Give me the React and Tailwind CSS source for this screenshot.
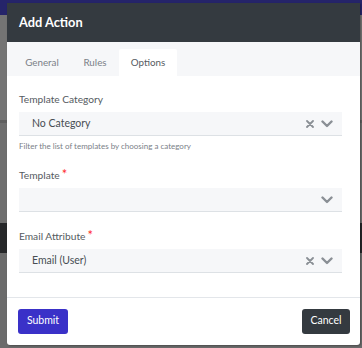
import React from 'react';

const font = { fontFamily: 'Lato, "Open Sans", sans-serif' };

function Chevron() {
  return (
    <svg width="12" height="8" viewBox="0 0 12 8" className="text-[#8a8f95]">
      <path d="M1.5 1.5 L6 6 L10.5 1.5" fill="none" stroke="currentColor" strokeWidth="2.4" strokeLinecap="round" strokeLinejoin="round" />
    </svg>
  );
}

function Clear() {
  return (
    <svg width="8" height="8" viewBox="0 0 8 8" className="text-[#8a8f95]">
      <path d="M1 1 L7 7 M7 1 L1 7" fill="none" stroke="currentColor" strokeWidth="1.8" strokeLinecap="round" />
    </svg>
  );
}

function Select({ value, clearable }) {
  return (
    <div className="h-[24px] bg-[#f6f7f9] border-b border-[#dde1e5] flex items-center pl-[13px] pr-[9px]">
      <span className="flex-1 text-[10.5px] text-[#474d53]">{value}</span>
      <div className="flex items-center gap-[7px]">
        {clearable && <Clear />}
        <Chevron />
      </div>
    </div>
  );
}

function Label({ children, required }) {
  return (
    <div className="h-[14px] flex items-center text-[10.2px] text-[#555b61]">
      {children}
      {required && <span className="text-[#ff2b2b] ml-[2px] text-[13px] leading-none -mt-[3px]">*</span>}
    </div>
  );
}

export default function App() {
  return (
    <div className="relative w-[362px] h-[348px] overflow-hidden bg-[#6e6e6e]" style={font}>
      {/* page behind the backdrop */}
      <div className="absolute inset-0 flex flex-col">
        <div className="h-[15px] bg-[#25246a]" />
        <div className="h-[105px] bg-[#747474]" />
        <div className="h-[3px] bg-[#5f5f5f]" />
        <div className="h-[100px] bg-[#6e6e6e]" />
        <div className="h-[30px] bg-[#262729]" />
        <div className="flex-1 bg-[#6b6b6b]" />
      </div>

      <div className="relative ml-[7px] mt-[3px] w-[353px] h-[342px] bg-white rounded-b-[3px] flex flex-col shadow-[1px_1px_2px_rgba(0,0,0,0.3)]">
        <div className="h-[39px] bg-[#343a40] flex items-center pl-[12px]">
          <span className="text-white font-bold text-[12.8px]">Add Action</span>
        </div>

        <div className="h-[34px] bg-[#f6f7f9] flex items-end pl-[6px]">
          <div className="h-[27px] w-[58px] flex items-center justify-center text-[9.8px] text-[#7a8087]">General</div>
          <div className="h-[27px] w-[48px] flex items-center justify-center text-[9.8px] text-[#7a8087]">Rules</div>
          <div className="h-[27px] w-[58px] bg-white flex items-center justify-center text-[9.8px] text-[#555b61] rounded-t-[2px]">Options</div>
        </div>

        <div className="flex-1 pl-[12px] pr-[18px] pt-[17px]">
          <Label>Template Category</Label>
          <div className="mt-[5px]">
            <Select value="No Category" clearable />
          </div>
          <div className="mt-[4px] h-[12px] flex items-center text-[8px] text-[#7a8087]">Filter the list of templates by choosing a category</div>

          <div className="mt-[17px]">
            <Label required>Template</Label>
          </div>
          <div className="mt-[5px]">
            <Select value="" />
          </div>

          <div className="mt-[18px]">
            <Label required>Email Attribute</Label>
          </div>
          <div className="mt-[5px]">
            <Select value="Email (User)" clearable />
          </div>
        </div>

        <div className="h-[48px] border-t border-[#e3e6ea] flex items-center justify-between pl-[11px] pr-[10px] pb-[1px]">
          <button className="h-[25px] w-[50px] rounded-[3px] bg-[#3a31c8] text-white text-[10.5px]">Submit</button>
          <button className="h-[25px] w-[48px] rounded-[3px] bg-[#343a40] text-white text-[10.5px]">Cancel</button>
        </div>
      </div>
    </div>
  );
}
